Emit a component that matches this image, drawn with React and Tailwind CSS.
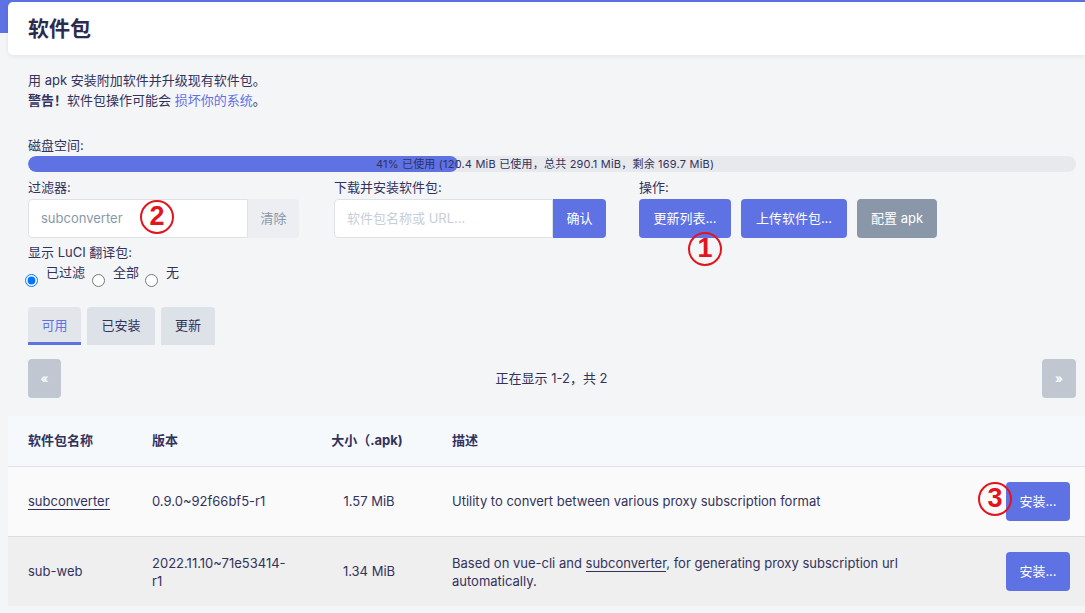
function Mark({ n, className }) {
  return (
    <div
      className={
        "pointer-events-none absolute flex h-[34px] w-[34px] items-center justify-center rounded-full border-[2.5px] border-[#e3141c] font-['Liberation_Sans',sans-serif] text-[27px] font-bold leading-none text-[#e3141c] " +
        className
      }
    >
      <span className="-mt-[1px]">{n}</span>
    </div>
  );
}

export default function App() {
  return (
    <div className="min-h-[613px] w-[1085px] overflow-hidden bg-[linear-gradient(#5e72e4_33px,#f4f5f7_33px)] font-[Inter,'Noto_Sans_CJK_SC',sans-serif] text-[13px] text-[#32325d]">
      {/* title card */}
      <div className="ml-[8px] mt-[2px] flex h-[53px] items-center rounded-l-[5px] bg-white pl-[20px] text-[21px] font-bold text-[#2b2b4f] shadow-[0_1px_5px_rgba(0,0,0,0.08)]">
        软件包
      </div>

      <div className="ml-[8px] pl-[20px] pr-[9px] pt-[15px]">
        <div className="leading-[20px]">用 apk 安装附加软件并升级现有软件包。</div>
        <div className="leading-[20px]">
          <span className="font-bold">警告！</span>软件包操作可能会{" "}
          <span className="text-[#5e72e4]">损坏你的系统</span>。
        </div>

        <div className="mt-[25px] leading-[20px]">磁盘空间:</div>
        <div className="relative mt-[1px] h-[16px] overflow-hidden rounded-full bg-[#e7e9ed]">
          <div className="h-full w-[41%] rounded-full bg-[#5e72e4]" />
          <div className="absolute inset-0 flex items-center justify-center pr-[14px] text-[11px] tracking-[0.2px] text-[#32325d]">
            41% 已使用 (120.4 MiB 已使用，总共 290.1 MiB，剩余 169.7 MiB)
          </div>
        </div>

        {/* filter row */}
        <div className="mt-[5px] flex">
          <div className="w-[306px]">
            <div className="leading-[20px]">过滤器:</div>
            <div className="relative mt-[2px] flex h-[39px]">
              <div className="flex w-[220px] items-center rounded-l-[4px] border border-[#dee2e6] bg-white pl-[12px] text-[#8898aa]">
                subconverter
              </div>
              <div className="flex w-[51px] items-center justify-center rounded-r-[4px] bg-[#eceef1] text-[#8898aa]">
                清除
              </div>
              <Mark n="2" className="left-[112px] top-[1px]" />
            </div>
          </div>
          <div className="w-[305px]">
            <div className="leading-[20px]">下载并安装软件包:</div>
            <div className="mt-[2px] flex h-[39px]">
              <div className="flex w-[219px] items-center rounded-l-[4px] border border-[#dee2e6] bg-white pl-[12px] text-[#c9ced6]">
                软件包名称或 URL...
              </div>
              <div className="flex w-[53px] items-center justify-center rounded-r-[4px] bg-[#5e72e4] text-white">
                确认
              </div>
            </div>
          </div>
          <div>
            <div className="leading-[20px]">操作:</div>
            <div className="mt-[2px] flex h-[39px] gap-[10px]">
              <div className="relative flex w-[92px] items-center justify-center rounded-[4px] bg-[#5e72e4] text-white">
                更新列表...
                <Mark n="1" className="left-[49px] top-[33px]" />
              </div>
              <div className="flex w-[106px] items-center justify-center rounded-[4px] bg-[#5e72e4] text-white">
                上传软件包...
              </div>
              <div className="flex w-[80px] items-center justify-center rounded-[4px] bg-[#8a97a8] text-white">
                配置 apk
              </div>
            </div>
          </div>
        </div>

        <div className="mt-[4px] leading-[20px]">显示 LuCI 翻译包:</div>
        <div className="-ml-[3px] flex items-start">
          <input type="radio" name="l" defaultChecked className="mt-[12px] h-[13px] w-[13px]" />
          <span className="ml-[8px] leading-[20px]">已过滤</span>
          <input type="radio" name="l" className="ml-[7px] mt-[12px] h-[13px] w-[13px]" />
          <span className="ml-[8px] leading-[20px]">全部</span>
          <input type="radio" name="l" className="ml-[6px] mt-[12px] h-[13px] w-[13px]" />
          <span className="ml-[8px] leading-[20px]">无</span>
        </div>

        {/* tabs */}
        <div className="mt-[20px] flex gap-[6px]">
          <div className="flex h-[38px] w-[53px] items-center justify-center rounded-t-[4px] border-b-[3px] border-[#5e72e4] bg-[#e2e6eb] pt-[3px] text-[#5e72e4]">
            可用
          </div>
          <div className="flex h-[38px] w-[68px] items-center justify-center rounded-t-[4px] bg-[#dde2e8]">
            已安装
          </div>
          <div className="flex h-[38px] w-[54px] items-center justify-center rounded-t-[4px] bg-[#dde2e8]">
            更新
          </div>
        </div>

        {/* pagination */}
        <div className="mt-[14px] flex h-[39px] items-center justify-between">
          <div className="flex h-[39px] w-[33px] items-center justify-center rounded-[4px] bg-[#c0c7d1] text-[12px] font-bold text-white">
            «
          </div>
          <div>正在显示 1-2，共 2</div>
          <div className="flex h-[39px] w-[34px] items-center justify-center rounded-[4px] bg-[#c0c7d1] text-[12px] font-bold text-white">
            »
          </div>
        </div>
      </div>

      {/* table */}
      <div className="ml-[8px] mt-[18px]">
        <div className="grid h-[51px] grid-cols-[124px_170px_130px_1fr] items-center border-b border-[#e1e3e6] bg-[#f6f9fc] font-bold">
          <div className="pl-[20px]">软件包名称</div>
          <div className="pl-[20px]">版本</div>
          <div className="text-center">大小（.apk)</div>
          <div className="pl-[20px]">描述</div>
        </div>
        <div className="grid h-[70px] grid-cols-[124px_170px_130px_1fr_auto] items-center border-b border-[#dcdcdc] bg-[#fafafa]">
          <div className="pl-[20px]">
            <span className="border-b border-[#32325d]">subconverter</span>
          </div>
          <div className="pl-[20px]">0.9.0~92f66bf5-r1</div>
          <div className="pl-[4px] text-center">1.57 MiB</div>
          <div className="pl-[20px]">Utility to convert between various proxy subscription format</div>
          <div className="pr-[15px]">
            <div className="relative flex h-[39px] w-[64px] items-center justify-center rounded-[4px] bg-[#5e72e4] text-white">
              安装...
              <Mark n="3" className="-left-[28px] top-0" />
            </div>
          </div>
        </div>
        <div className="grid h-[69px] grid-cols-[124px_170px_130px_1fr_auto] items-center bg-[#efefef]">
          <div className="pl-[20px]">sub-web</div>
          <div className="pl-[20px] leading-[18px]">
            2022.11.10~71e53414-
            <br />
            r1
          </div>
          <div className="pl-[4px] text-center">1.34 MiB</div>
          <div className="pl-[20px] leading-[18px]">
            Based on vue-cli and{" "}
            <span className="border-b border-[#32325d]">subconverter</span>, for generating proxy subscription url
            <br />
            automatically.
          </div>
          <div className="pr-[15px]">
            <div className="flex h-[39px] w-[64px] items-center justify-center rounded-[4px] bg-[#5e72e4] text-white">
              安装...
            </div>
          </div>
        </div>
      </div>
    </div>
  );
}
